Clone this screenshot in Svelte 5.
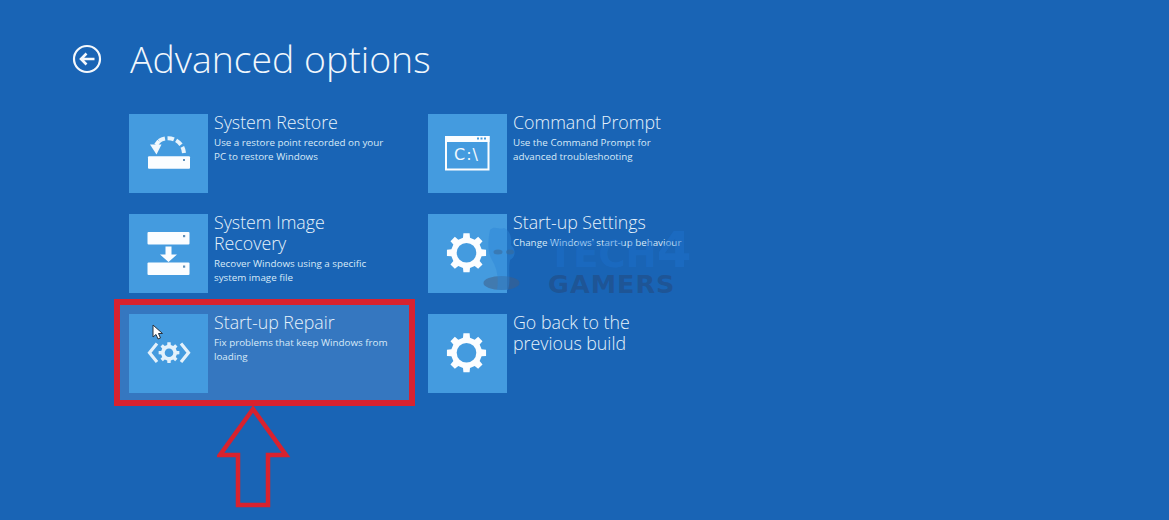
<script>
  function gear(cx, cy, outer, inner, teeth) {
    const pts = [];
    const step = (Math.PI * 2) / teeth;
    for (let i = 0; i < teeth; i++) {
      const a = i * step - Math.PI / 2;
      const w1 = step * 0.2, w2 = step * 0.29;
      const p = [[inner, a - w2], [outer, a - w1], [outer, a + w1], [inner, a + w2]];
      for (const [r, t] of p) pts.push(`${(cx + r * Math.cos(t)).toFixed(2)} ${(cy + r * Math.sin(t)).toFixed(2)}`);
    }
    return 'M' + pts.join('L') + 'Z';
  }
  const bigGear = gear(38.5, 38.8, 19.8, 15.5, 8);
  const smallGear = gear(40, 38.7, 10.5, 8, 8);
  const items = [
    { id: 'restore', title: ['System Restore'], desc: ['Use a restore point recorded on your', 'PC to restore Windows'] },
    { id: 'cmd', title: ['Command Prompt'], desc: ['Use the Command Prompt for', 'advanced troubleshooting'] },
    { id: 'image', title: ['System Image', 'Recovery'], desc: ['Recover Windows using a specific', 'system image file'] },
    { id: 'gear', title: ['Start-up Settings'], desc: ["Change Windows' start-up behaviour"] },
    { id: 'repair', title: ['Start-up Repair'], desc: ['Fix problems that keep Windows from', 'loading'] },
    { id: 'gear', title: ['Go back to the', 'previous build'], desc: [] }
  ];
</script>

<div class="screen">
  <header class="head">
    <svg class="back" viewBox="0 0 30 30" width="30" height="30" aria-hidden="true">
      <circle cx="15" cy="15" r="13" fill="none" stroke="#f4f8fc" stroke-width="2.2" />
      <path d="M22.5 15H9M14.5 9.5L9 15l5.500 5.500" fill="none" stroke="#f4f8fc" stroke-width="2.600" />
    </svg>
    <h1>Advanced options</h1>
  </header>

  <div class="grid">
    {#each items as item}
      <div class="item">
        <div class="tile">
          <svg viewBox="0 0 79 79" width="79" height="79" aria-hidden="true">
            {#if item.id === 'restore'}
              <path d="M30 27A16 16 0 0 1 55 39" fill="none" stroke="#e8f4fc" stroke-width="4" stroke-dasharray="6.500 2.500" />
              <path d="M30 27L27 31" fill="none" stroke="#f2f8fd" stroke-width="4" />
              <path d="M21 30.500l11.500 0 -5 10z" fill="#f2f8fd" />
              <rect x="19" y="42.300" width="42" height="12.500" rx="1" fill="#fbfdff" />
              <rect x="54" y="45" width="2" height="2" fill="#5f8fb8" />
            {:else if item.id === 'image'}
              <rect x="18.500" y="18" width="42" height="12.500" rx="1" fill="#fbfdff" />
              <rect x="54" y="21" width="2.200" height="2.200" fill="#5f8fb8" />
              <path d="M36.500 32.500h6v8h5.500l-8.500 7.500-8.500-7.500h5.500z" fill="#fbfdff" />
              <rect x="18.500" y="48.500" width="42" height="12.500" rx="1" fill="#fbfdff" />
              <rect x="54" y="51.500" width="2.200" height="2.200" fill="#5f8fb8" />
            {:else if item.id === 'repair'}
              <path d={smallGear} fill="#e3f1fb" />
              <circle cx="40" cy="38.700" r="4.300" fill="#449bdf" />
              <path d="M28 29.500L20.500 38.700 28 48M52 29.500L59.500 38.700 52 48" fill="none" stroke="#e3f1fb" stroke-width="3.200" />
            {:else if item.id === 'cmd'}
              <rect x="18" y="23" width="42.500" height="32.500" fill="none" stroke="#fbfdff" stroke-width="2" />
              <rect x="17" y="22" width="44.500" height="6" fill="#fbfdff" />
              <path d="M49 23.500h2v2h-2zM52.500 23.500h2v2h-2zM56 23.500h2v2h-2z" fill="#449bdf" />
              <text x="26" y="46" class="prompt">C:\</text>
            {:else}
              <path d={bigGear} fill="#fbfdff" />
              <circle cx="38.500" cy="38.800" r="9.800" fill="#449bdf" />
            {/if}
          </svg>
        </div>
        <div class="copy">
          <h2>{#each item.title as line}<span>{line}</span>{/each}</h2>
          {#if item.desc.length}
            <p>{#each item.desc as line}<span>{line}</span>{/each}</p>
          {/if}
        </div>
      </div>
    {/each}
  </div>

  <!-- Annotation and watermark overlays -->
  <div class="highlight"></div>
  <svg class="arrow" viewBox="0 0 76 104" width="76" height="104" aria-hidden="true">
    <path d="M36 4L69 50H51V100H21V50H3Z" fill="none" stroke="#d8222f" stroke-width="4.500" />
  </svg>
  <svg class="cursor" viewBox="0 0 12 16" width="12" height="16" aria-hidden="true">
    <path d="M1 1V13L4 10.500 6 15 8.500 14 6.500 9.500H10.500Z" fill="#fff" stroke="#27313d" stroke-width="1" />
  </svg>
  <div class="mark">
    <svg class="mascot" viewBox="0 0 46 76" width="46" height="76" aria-hidden="true">
      <ellipse cx="21.500" cy="61" rx="18" ry="7" fill="#3f5f86" opacity="0.55" />
      <path d="M10 8C14 3 20 8 24 6 30 8 32 16 31 23 36 27 36 35 30 38 28 48 31 58 28 68H17C19 56 17 46 12 38 7 30 8 18 10 8Z" fill="#2d86d6" opacity="0.45" />
      <ellipse cx="18" cy="30" rx="4.500" ry="2.500" fill="#3a6795" opacity="0.55" />
      <ellipse cx="30" cy="30" rx="4" ry="2.500" fill="#3a6795" opacity="0.55" />
    </svg>
    <div class="brand">
      <div class="tech">TECH<b>4</b></div>
      <div class="gamers">GAMERS</div>
    </div>
  </div>
</div>

<style>
  :global(body) {
    margin: 0;
    background: #1964b5;
  }
  .screen {
    position: relative;
    width: 1169px;
    height: 520px;
    overflow: hidden;
    background: #1964b5;
    color: #eef6fd;
    font-family: "Open Sans", "Liberation Sans", sans-serif;
    box-sizing: border-box;
    padding: 32px 0 0 72px;
  }
  .head {
    display: flex;
    align-items: center;
    height: 54px;
  }
  .back {
    flex: none;
  }
  h1 {
    margin: 0 0 0 28px;
    font-size: 37.400px;
    font-weight: 300;
    line-height: 54px;
    color: #f1f7fc;
    white-space: nowrap;
  }
  .grid {
    position: relative;
    z-index: 1;
    display: grid;
    grid-template-columns: 299px 299px;
    grid-auto-rows: 79px;
    row-gap: 21px;
    margin: 28px 0 0 57px;
  }
  .item {
    display: flex;
    gap: 6px;
  }
  .tile {
    width: 79px;
    height: 79px;
    background: #449bdf;
    flex: none;
  }
  .tile svg {
    display: block;
  }
  .prompt {
    font-family: "DejaVu Sans", sans-serif;
    font-size: 16px;
    letter-spacing: 1px;
    fill: #f2f8fd;
  }
  h2 {
    margin: -2.500px 0 0;
    font-size: 17.800px;
    font-weight: 300;
    line-height: 21px;
    color: #e6f2fb;
  }
  span {
    display: block;
    white-space: nowrap;
  }
  p {
    margin: 3px 0 0;
    font-size: 9.800px;
    line-height: 14px;
    color: #d8eaf8;
  }
  .highlight {
    position: absolute;
    z-index: 0;
    left: 114px;
    top: 299px;
    width: 301px;
    height: 107px;
    box-sizing: border-box;
    border: 6px solid #d8222f;
    box-shadow: inset 0 0 0 100px rgba(120, 165, 220, 0.3);
  }
  .arrow {
    position: absolute;
    left: 217px;
    top: 405px;
    z-index: 2;
  }
  .cursor {
    position: absolute;
    left: 152px;
    top: 324px;
    z-index: 2;
  }
  .mark {
    position: absolute;
    left: 480px;
    top: 222px;
    display: flex;
    gap: 22px;
    z-index: 2;
  }
  .brand {
    margin-top: 8px;
  }
  .tech {
    height: 42px;
    font-family: "DejaVu Sans", sans-serif;
    font-weight: 700;
    font-size: 37px;
    line-height: 40px;
    color: rgba(30, 115, 210, 0.4);
    white-space: nowrap;
  }
  .tech b {
    font-weight: 700;
    font-size: 50px;
    line-height: 40px;
  }
  .gamers {
    font-family: "DejaVu Sans", sans-serif;
    font-weight: 700;
    font-size: 25.500px;
    line-height: 24px;
    letter-spacing: 1px;
    color: rgba(35, 70, 120, 0.5);
    white-space: nowrap;
  }
</style>
